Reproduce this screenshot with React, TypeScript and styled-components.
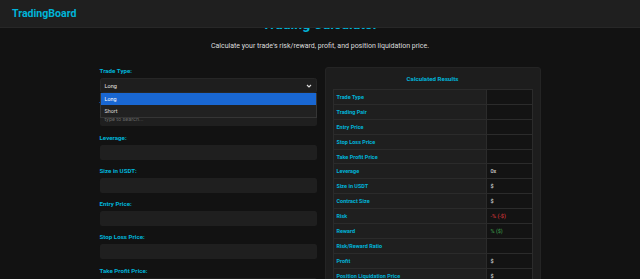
import React from "react";
import styled, { createGlobalStyle } from "styled-components";

const GlobalStyle = createGlobalStyle`
  html, body { margin: 0; padding: 0; background: #121212; }
  body { font-family: Roboto, "Liberation Sans", sans-serif; color: #ddd; }
  * { box-sizing: border-box; }
`;

const CYAN = "#00b4d8";

const Header = styled.header`
  position: fixed;
  top: 0;
  left: 0;
  right: 0;
  height: 28px;
  background: #1f1f1f;
  border-bottom: 1px solid #272727;
  display: flex;
  align-items: center;
  padding-left: 12px;
  z-index: 10;
`;

const Logo = styled.div`
  color: ${CYAN};
  font-weight: 700;
  font-size: 10.6px;
`;

const Page = styled.main`
  padding-top: 15.5px;
`;

const Title = styled.h1`
  margin: 0;
  text-align: center;
  color: ${CYAN};
  font-size: 14px;
  line-height: 16px;
  font-weight: 700;
`;

const Subtitle = styled.p`
  margin: 10.5px 0 0;
  text-align: center;
  font-size: 7px;
  line-height: 9px;
  color: #ddd;
`;

const Content = styled.div`
  margin: 16px auto 0;
  width: 441px;
  display: grid;
  grid-template-columns: 217px 216px;
  column-gap: 8px;
  align-items: start;
`;

const Form = styled.div`
  display: flex;
  flex-direction: column;
`;

const Field = styled.div`
  display: flex;
  flex-direction: column;
  gap: 3px;
  margin-bottom: 7.3px;
`;

const Label = styled.label`
  color: ${CYAN};
  font-weight: 700;
  font-size: 6.2px;
  line-height: 8px;
`;

const Input = styled.div`
  height: 15px;
  background: #1f1f1f;
  border-radius: 2.5px;
  display: flex;
  align-items: center;
  padding-left: 5px;
  font-size: 5.5px;
  color: #666;
`;

const SelectWrap = styled.div`
  position: relative;
  z-index: 2;
`;

const SelectBox = styled.div`
  height: 15px;
  background: #1e1e1e;
  border: 1px solid #262626;
  border-radius: 2.5px;
  display: flex;
  align-items: center;
  justify-content: space-between;
  padding: 0 4px 0 4px;
  font-size: 5.6px;
  color: #e6e6e6;
`;

const Options = styled.div`
  position: absolute;
  top: 100%;
  left: 0;
  right: 0;
  background: #202020;
  border: 1px solid #353535;
  border-top: none;
`;

const Option = styled.div<{ $active?: boolean }>`
  height: 12px;
  display: flex;
  align-items: center;
  padding-left: 4px;
  font-size: 5.4px;
  color: ${(p) => (p.$active ? "#fff" : "#ddd")};
  background: ${(p) => (p.$active ? "#1967d2" : "#212121")};
`;

const Panel = styled.section`
  background: #1d1d1d;
  border: 1px solid #242424;
  border-radius: 3px;
  padding: 7px 7px 0;
  min-height: 230px;
`;

const PanelTitle = styled.h2`
  margin: 0 0 6px;
  text-align: center;
  color: ${CYAN};
  font-size: 6.2px;
  line-height: 8px;
  font-weight: 700;
`;

const Table = styled.table`
  width: 200px;
  border-collapse: collapse;
  table-layout: fixed;
`;

const Row = styled.tr`
  height: 14.9px;
`;

const KeyCell = styled.td`
  width: 153px;
  background: #1f1f1f;
  border: 1px solid #2b2b2b;
  color: ${CYAN};
  font-weight: 700;
  font-size: 5.5px;
  padding: 0 0 0 3px;
`;

const ValueCell = styled.td<{ $tone?: "red" | "green" }>`
  background: #131313;
  border: 1px solid #2b2b2b;
  font-size: 5.5px;
  padding: 0 0 0 4px;
  color: ${(p) =>
    p.$tone === "red" ? "#e0393e" : p.$tone === "green" ? "#3fa34d" : "#e6e6e6"};
`;

const Chevron = () => (
  <svg width="6" height="4" viewBox="0 0 6 4">
    <path d="M1 1 L3 3 L5 1" fill="none" stroke="#ddd" strokeWidth="1.1" />
  </svg>
);

const fields = [
  "Leverage:",
  "Size in USDT:",
  "Entry Price:",
  "Stop Loss Price:",
  "Take Profit Price:",
];

const results: { k: string; v: string; tone?: "red" | "green" }[] = [
  { k: "Trade Type", v: "" },
  { k: "Trading Pair", v: "" },
  { k: "Entry Price", v: "" },
  { k: "Stop Loss Price", v: "" },
  { k: "Take Profit Price", v: "" },
  { k: "Leverage", v: "0x" },
  { k: "Size in USDT", v: "$" },
  { k: "Contract Size", v: "$" },
  { k: "Risk", v: "-% (-$)", tone: "red" },
  { k: "Reward", v: "% ($)", tone: "green" },
  { k: "Risk/Reward Ratio", v: "" },
  { k: "Profit", v: "$" },
  { k: "Position Liquidation Price", v: "$" },
];

export default function App() {
  return (
    <>
      <GlobalStyle />
      <Header>
        <Logo>TradingBoard</Logo>
      </Header>
      <Page>
        <Title>Trading Calculator</Title>
        <Subtitle>
          Calculate your trade's risk/reward, profit, and position liquidation price.
        </Subtitle>
        <Content>
          <Form>
            <Field>
              <Label>Trade Type:</Label>
              <SelectWrap>
                <SelectBox>
                  <span>Long</span>
                  <Chevron />
                </SelectBox>
                <Options>
                  <Option $active>Long</Option>
                  <Option>Short</Option>
                </Options>
              </SelectWrap>
            </Field>
            <Field>
              <Label>Trading Pair:</Label>
              <Input>type to search...</Input>
            </Field>
            {fields.map((f) => (
              <Field key={f}>
                <Label>{f}</Label>
                <Input />
              </Field>
            ))}
          </Form>
          <Panel>
            <PanelTitle>Calculated Results</PanelTitle>
            <Table>
              <tbody>
                {results.map((r) => (
                  <Row key={r.k}>
                    <KeyCell>{r.k}</KeyCell>
                    <ValueCell $tone={r.tone}>{r.v}</ValueCell>
                  </Row>
                ))}
              </tbody>
            </Table>
          </Panel>
        </Content>
      </Page>
    </>
  );
}
